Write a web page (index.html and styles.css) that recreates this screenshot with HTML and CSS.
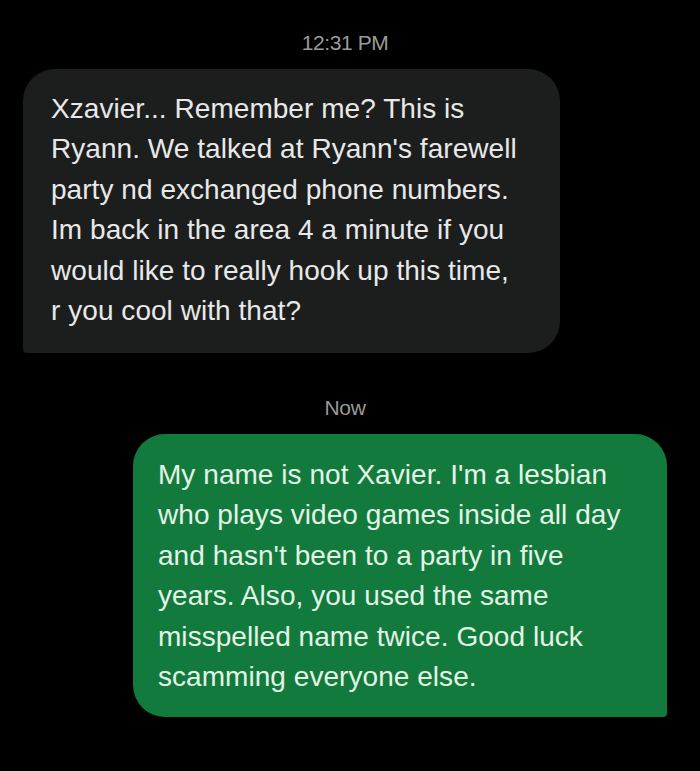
FILE: index.html
```html
<!DOCTYPE html>
<html lang="en">
<head>
  <meta charset="UTF-8" />
  <meta name="viewport" content="width=device-width, initial-scale=1.0" />
  <title>Messages</title>
  <link rel="stylesheet" href="styles.css">
</head>
<body>
  <main class="thread">
    <div class="stamp stamp-first">12:31 PM</div>
    <div class="bubble incoming">
      Xzavier... Remember me? This is<br>
      Ryann. We talked at Ryann's farewell<br>
      party nd exchanged phone numbers.<br>
      Im back in the area 4 a minute if you<br>
      would like to really hook up this time,<br>
      r you cool with that?
    </div>
    <div class="stamp">Now</div>
    <div class="bubble outgoing">
      My name is not Xavier. I'm a lesbian<br>
      who plays video games inside all day<br>
      and hasn't been to a party in five<br>
      years. Also, you used the same<br>
      misspelled name twice. Good luck<br>
      scamming everyone else.
    </div>
  </main>
</body>
</html>
```

FILE: styles.css
```css
* {
  margin: 0;
  padding: 0;
  box-sizing: border-box;
}
body {
  background: #000;
  font-family: 'Liberation Sans', Arial, sans-serif;
  color: #e8e8e8;
  height: 771px;
  overflow: hidden;
}
.thread {
  display: flex;
  flex-direction: column;
  padding: 0 33px 0 23px;
}
.stamp {
  align-self: center;
  color: #9a9a9a;
  font-size: 21px;
  line-height: 24px;
  margin: 43px 0 14px;
  letter-spacing: -0.4px;
}
.stamp-first {
  margin-top: 31px;
}
.bubble {
  font-size: 28px;
  line-height: 40.4px;
  letter-spacing: 0.05px;
  padding: 20px 16px 0 28px;
  border-radius: 32px;
  white-space: nowrap;
}
.incoming {
  align-self: flex-start;
  width: 537px;
  height: 284px;
  background: #1c1e1e;
  border-bottom-left-radius: 4px;
}
.outgoing {
  align-self: flex-end;
  width: 534px;
  height: 283px;
  padding-top: 21px;
  padding-left: 25px;
  background: #137a3d;
  color: #e2f4e6;
  border-bottom-right-radius: 4px;
}
```
